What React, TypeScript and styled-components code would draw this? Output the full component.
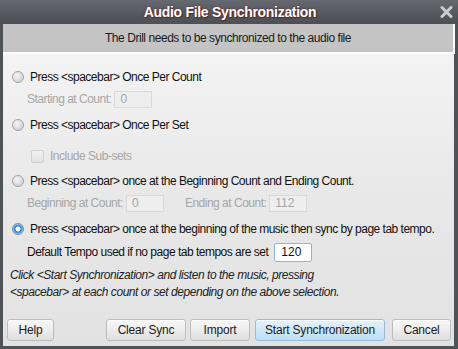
import React, { useState } from 'react';
import styled, { createGlobalStyle } from 'styled-components';

const GlobalStyle = createGlobalStyle`
  html, body {
    margin: 0;
    padding: 0;
    background: #4f5257;
  }
  body {
    font-family: "Liberation Sans", Arial, sans-serif;
  }
`;

const Window = styled.div`
  width: 458px;
  height: 349px;
  box-sizing: border-box;
  display: flex;
  flex-direction: column;
  background: #4f5257;
  padding: 0 4px 3px 3px;
`;

const TitleBar = styled.div`
  height: 24px;
  margin: 0 -4px 0 -3px;
  display: flex;
  align-items: center;
  justify-content: center;
  position: relative;
  background: linear-gradient(#666970, #54575d 60%, #4c4f54);
`;

const Title = styled.div`
  color: #ffffff;
  font-size: 14px;
  font-weight: bold;
  letter-spacing: -0.3px;
  text-shadow: 1px 1px 1px #5c2424, 0 0 2px #5c2424;
  padding-left: 2px;
`;

const CloseButton = styled.button`
  position: absolute;
  right: 5px;
  top: 6px;
  width: 13px;
  height: 12px;
  padding: 0;
  border: none;
  background: none;
  display: flex;
  cursor: pointer;
`;

const Banner = styled.div`
  height: 28px;
  display: flex;
  align-items: center;
  justify-content: center;
  background: #c4c4c4;
  border-bottom: 2px solid #ffffff;
  border-right: 2px solid #ffffff;
  font-size: 12px;
  letter-spacing: -0.45px;
  color: #1a1a1a;
  margin-right: -1px;
`;

const Body = styled.div`
  flex: 1;
  display: flex;
  flex-direction: column;
  padding: 0 3px 5px 9px;
  background: linear-gradient(#f3f3f3, #e8e8e8 50%, #e2e2e2);
  font-size: 12px;
  letter-spacing: -0.5px;
  color: #111;
`;

const Row = styled.div<{ $top: number; $indent?: number }>`
  height: 18px;
  display: flex;
  align-items: center;
  margin-top: ${p => p.$top}px;
  padding-left: ${p => p.$indent ?? 0}px;
  white-space: nowrap;
`;

const RadioMark = styled.span<{ $checked: boolean }>`
  width: 12px;
  height: 12px;
  box-sizing: border-box;
  border-radius: 50%;
  margin-right: 6px;
  flex-shrink: 0;
  border: 1px solid ${p => (p.$checked ? '#7d8c9c' : '#a3a3a3')};
  background: ${p =>
    p.$checked
      ? 'radial-gradient(circle, #ffffff 0, #ffffff 2.2px, #2f86dc 2.8px, #4a9ae8 4px, #9dc8ee 5px)'
      : 'radial-gradient(circle at 40% 35%, #f4f4f4, #d6d6d6 70%, #c6c6c6)'};
`;

const Label = styled.span<{ $disabled?: boolean; $gap?: number; $left?: number }>`
  color: ${p => (p.$disabled ? '#a6a6a6' : '#111')};
  margin-right: ${p => p.$gap ?? 3}px;
  margin-left: ${p => p.$left ?? 0}px;
`;

const Field = styled.input<{ $width: number; $active?: boolean }>`
  width: ${p => p.$width}px;
  height: ${p => (p.$active ? 19 : 17)}px;
  box-sizing: border-box;
  padding: 0 0 0 ${p => (p.$active ? 6 : 5)}px;
  font-family: inherit;
  font-size: 12px;
  letter-spacing: 0;
  border: 1px solid ${p => (p.$active ? '#8bb6de' : '#d9d9d9')};
  border-radius: ${p => (p.$active ? 2 : 0)}px;
  background: ${p => (p.$active ? '#ffffff' : '#eeeeee')};
  color: ${p => (p.$active ? '#111' : '#a6a6a6')};
  outline: none;
`;

const CheckMark = styled.span`
  width: 13px;
  height: 13px;
  box-sizing: border-box;
  border: 1px solid #cfcfcf;
  border-radius: 2px;
  background: linear-gradient(#f1f1f1, #e2e2e2);
  margin-right: 6px;
`;

const Note = styled.div`
  margin-top: 6px;
  margin-left: -2px;
  font-style: italic;
  letter-spacing: -0.45px;
  line-height: 17px;
  color: #222;
`;

const ButtonBar = styled.div`
  margin-top: auto;
  margin-left: -5px;
  display: flex;
  align-items: center;
`;

const Button = styled.button<{ $width: number; $primary?: boolean; $left?: number }>`
  width: ${p => p.$width}px;
  height: 22px;
  margin-left: ${p => p.$left ?? 0}px;
  padding: 0;
  font-family: inherit;
  font-size: 12px;
  letter-spacing: -0.2px;
  color: #1c1c1c;
  border-radius: 3px;
  border: 1px solid ${p => (p.$primary ? '#97bcd9' : '#bdbdbd')};
  background: ${p =>
    p.$primary
      ? 'linear-gradient(#e6f3fc, #cfe7f8 50%, #bddff6)'
      : 'linear-gradient(#f8f8f8, #ececec 50%, #dedede)'};
  box-shadow: inset 0 1px 0 rgba(255, 255, 255, 0.8);
  cursor: pointer;
`;

const Radio: React.FC<{ checked: boolean; onSelect: () => void; children: React.ReactNode; top: number }> = ({
  checked,
  onSelect,
  children,
  top,
}) => (
  <Row $top={top} onClick={onSelect}>
    <RadioMark $checked={checked} />
    <Label>{children}</Label>
  </Row>
);

export default function App() {
  const [mode, setMode] = useState(3);
  const [tempo, setTempo] = useState('120');

  return (
    <Window>
      <GlobalStyle />
      <TitleBar>
        <Title>Audio File Synchronization</Title>
        <CloseButton aria-label="Close">
          <svg width="13" height="12" viewBox="0 0 13 12">
            <path d="M2 1.5 L11 10.5 M11 1.5 L2 10.5" stroke="#cbcdd0" strokeWidth="3" strokeLinecap="round" />
          </svg>
        </CloseButton>
      </TitleBar>
      <Banner>The Drill needs to be synchronized to the audio file</Banner>
      <Body>
        <Radio top={14} checked={mode === 0} onSelect={() => setMode(0)}>
          Press &lt;spacebar&gt; Once Per Count
        </Radio>
        <Row $top={4} $indent={15}>
          <Label $disabled>Starting at Count:</Label>
          <Field $width={38} value="0" disabled readOnly />
        </Row>
        <Radio top={8} checked={mode === 1} onSelect={() => setMode(1)}>
          Press &lt;spacebar&gt; Once Per Set
        </Radio>
        <Row $top={13} $indent={19}>
          <CheckMark />
          <Label $disabled>Include Sub-sets</Label>
        </Row>
        <Radio top={7} checked={mode === 2} onSelect={() => setMode(2)}>
          Press &lt;spacebar&gt; once at the Beginning Count and Ending Count.
        </Radio>
        <Row $top={4} $indent={15}>
          <Label $disabled>Beginning at Count:</Label>
          <Field $width={38} value="0" disabled readOnly />
          <Label $disabled $left={21}>Ending at Count:</Label>
          <Field $width={38} value="112" disabled readOnly />
        </Row>
        <Radio top={8} checked={mode === 3} onSelect={() => setMode(3)}>
          Press &lt;spacebar&gt; once at the beginning of the music then sync by page tab tempo.
        </Radio>
        <Row $top={5} $indent={15}>
          <Label $gap={6}>Default Tempo used if no page tab tempos are set</Label>
          <Field $width={38} $active value={tempo} onChange={e => setTempo(e.target.value)} />
        </Row>
        <Note>
          Click &lt;Start Synchronization&gt; and listen to the music, pressing
          <br />
          &lt;spacebar&gt; at each count or set depending on the above selection.
        </Note>
        <ButtonBar>
          <Button $width={47}>Help</Button>
          <Button $width={80} $left={52}>Clear Sync</Button>
          <Button $width={60} $left={4}>Import</Button>
          <Button $width={130} $left={5} $primary>Start Synchronization</Button>
          <Button $width={59} $left={7}>Cancel</Button>
        </ButtonBar>
      </Body>
    </Window>
  );
}
